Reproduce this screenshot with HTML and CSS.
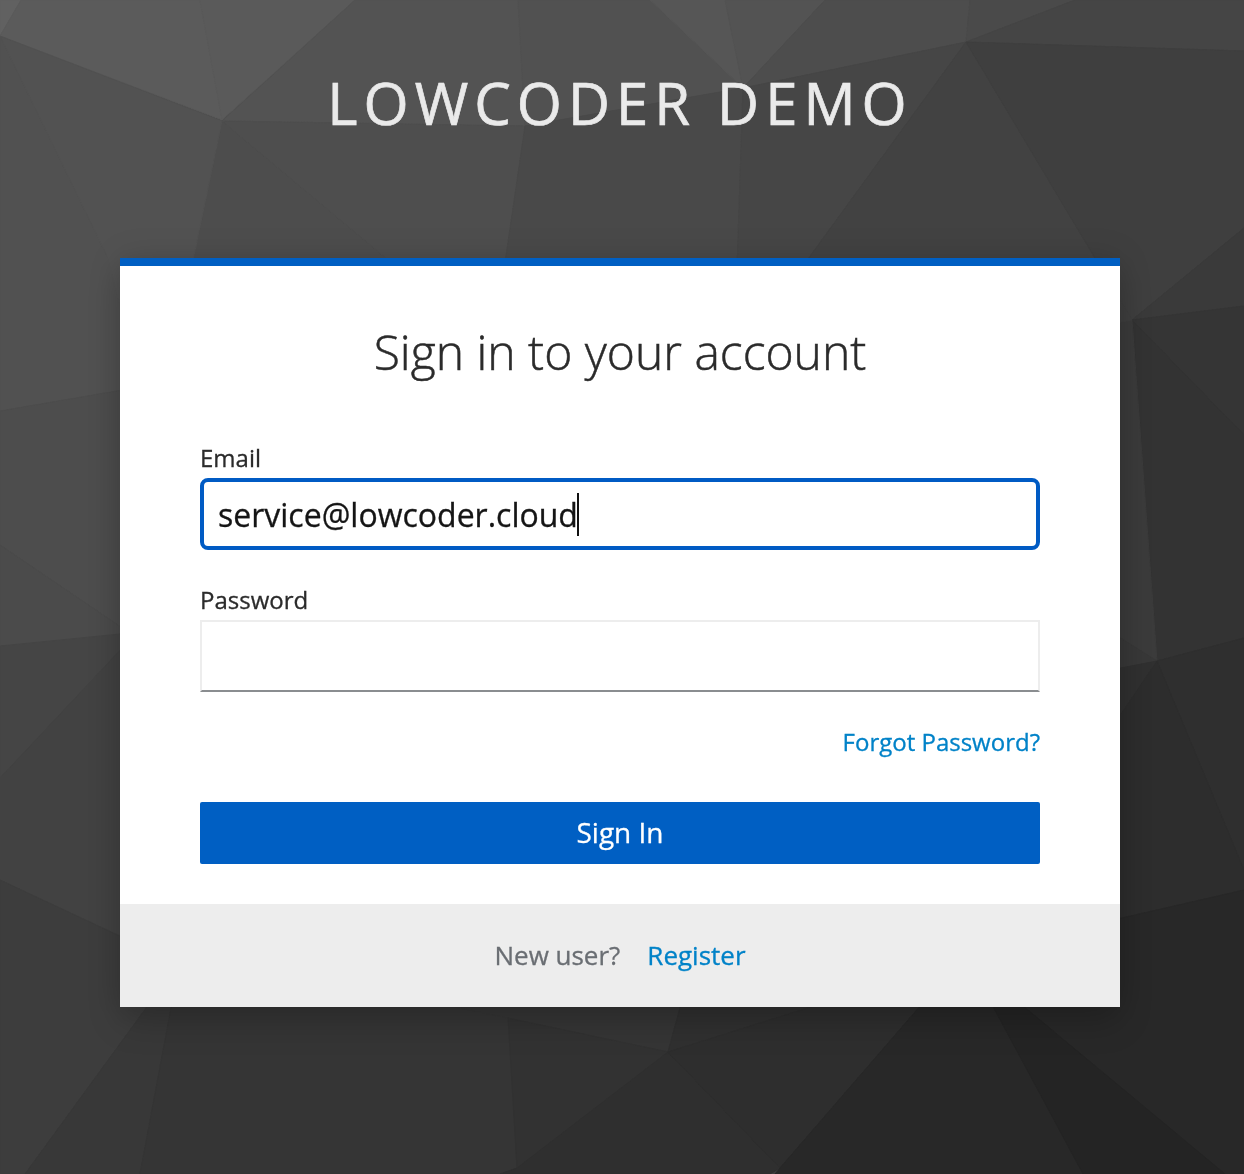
FILE: index.html
```html
<!DOCTYPE html>
<html lang="en">
<head>
<meta charset="utf-8">
<title>Sign in to Lowcoder Demo</title>
<link rel="stylesheet" href="styles.css">
</head>
<body>
<svg class="backdrop" viewBox="0 0 1244 1174" preserveAspectRatio="xMidYMid slice" aria-hidden="true">
  <!-- top -->
  <path color="#616161" d="M0 0H21L0 36Z"/>
  <path color="#5b5b5b" d="M21 0H200L222 120L0 36Z"/>
  <path color="#5a5a5a" d="M200 0H355L222 120Z"/>
  <path color="#535353" d="M355 0H518L525 126L222 121Z"/>
  <path color="#515151" d="M518 0H650L743 88L525 126Z"/>
  <path color="#565656" d="M650 0H725L743 88Z"/>
  <path color="#535353" d="M725 0H825L743 88Z"/>
  <path color="#4d4d4d" d="M825 0H970L966 42L743 88Z"/>
  <path color="#4a4a4a" d="M970 0H1075L966 42Z"/>
  <path color="#454545" d="M1075 0H1244V51L966 42Z"/>
  <path color="#4d4d4d" d="M222 121L400 270H191Z"/>
  <path color="#4e4e4e" d="M222 121L525 126L504 270H400Z"/>
  <path color="#494949" d="M525 126L743 88L737 270H504Z"/>
  <path color="#464646" d="M743 88L966 42L800 270H737Z"/>
  <path color="#424242" d="M966 42L1132 320L800 270Z"/>
  <path color="#3f3f3f" d="M966 42L1244 51V228L1132 320Z"/>
  <!-- left side -->
  <path color="#515151" d="M0 36L108 258L140 387L0 411Z"/>
  <path color="#525252" d="M0 36L222 121L191 270L140 387L108 258Z"/>
  <path color="#4d4d4d" d="M0 411L140 387V640L0 545Z"/>
  <path color="#4b4b4b" d="M0 545L140 640L0 646Z"/>
  <path color="#454545" d="M0 646L140 632L0 778Z"/>
  <path color="#424242" d="M0 778L140 629V945L0 880Z"/>
  <path color="#3d3d3d" d="M0 880L160 955V989L25 1174H0Z"/>
  <!-- right side -->
  <path color="#3a3a3a" d="M1132 320L1244 228V306Z"/>
  <path color="#353535" d="M1132 320L1244 306V435Z"/>
  <path color="#333333" d="M1132 320L1244 435V638L1157 661Z"/>
  <path color="#3b3b3b" d="M1132 320L1157 661L1100 625V326Z"/>
  <path color="#3f3f3f" d="M1132 320L1100 270V326Z"/>
  <path color="#383838" d="M1157 661L1100 625V672Z"/>
  <path color="#303030" d="M1157 661L1100 672V745Z"/>
  <path color="#2f2f2f" d="M1157 661L1244 638V870Z"/>
  <path color="#2d2d2d" d="M1157 661L1244 870V890L1100 923V745Z"/>
  <!-- bottom -->
  <path color="#383838" d="M160 989L180 960L140 1174H25Z"/>
  <path color="#353535" d="M180 960H507L517 1168L500 1174H140Z"/>
  <path color="#353535" d="M440 960H693L668 1052L455 1007Z"/>
  <path color="#323232" d="M508 1018L668 1052L517 1168Z"/>
  <path color="#303030" d="M693 960H960L668 1052Z"/>
  <path color="#2f2f2f" d="M668 1052L780 1168L770 1174H500L517 1168Z"/>
  <path color="#2e2e2e" d="M668 1052L960 960L780 1168Z"/>
  <path color="#282828" d="M960 960L1100 923L1244 890V1174H775L780 1168Z"/>
  <path color="#242424" d="M968 960L1083 1174H1225Z"/>
</svg>
<div class="page">
  <header class="brand">Lowcoder Demo</header>
  <main class="card">
    <div class="card-body">
      <h1 class="title">Sign in to your account</h1>
      <form class="form">
        <div class="group">
          <div class="label">Email</div>
          <div class="field field-active"><span>service@lowcoder.cloud</span><i class="caret"></i></div>
        </div>
        <div class="group">
          <div class="label">Password</div>
          <div class="field"></div>
        </div>
        <a class="link forgot">Forgot Password?</a>
        <button class="submit" type="button">Sign In</button>
      </form>
    </div>
    <footer class="card-footer"><span>New user?</span><a class="link">Register</a></footer>
  </main>
</div>
</body>
</html>
```
FILE: styles.css
```css
* { box-sizing: border-box; }

body {
  margin: 0;
  background: #3e3e3e;
  color: #2b2b2b;
  font-family: "Open Sans", sans-serif;
  -webkit-text-stroke: .3px currentColor;
  overflow: hidden;
}

.backdrop {
  position: fixed;
  inset: 0;
  z-index: -1;
  width: 100%;
  height: 100%;
}

/* the thin stroke closes the seams between neighbouring facets */
.backdrop path {
  fill: currentColor;
  stroke: currentColor;
  stroke-width: 1;
  stroke-linejoin: round;
}

.page {
  display: flex;
  flex-direction: column;
  width: 1240px;
  min-height: 1174px;
}

.brand {
  height: 258px;
  padding-top: 63px;
  color: #eaeaea;
  font-size: 58px;
  line-height: 80px;
  letter-spacing: 6px;
  text-align: center;
  text-transform: uppercase;
  -webkit-text-stroke-width: .7px;
}

.card {
  display: flex;
  flex-direction: column;
  align-self: center;
  width: 1000px;
  height: 749px;
  background: #fff;
  border-top: 8px solid #005fc3;
  box-shadow: 0 16px 32px rgba(3, 3, 3, .16), 0 0 32px rgba(3, 3, 3, .12);
}

.card-body {
  flex: 1;
  padding: 55px 80px 0;
}

.title {
  margin: 0 0 59px;
  font-size: 48px;
  font-weight: 300;
  line-height: 62px;
  text-align: center;
  -webkit-text-stroke-width: .5px;
}

.form {
  display: flex;
  flex-direction: column;
}

.group { margin-bottom: 34px; }

.label {
  height: 36px;
  font-size: 24px;
  line-height: 32px;
}

.field {
  display: flex;
  align-items: center;
  height: 72px;
  padding: 0 14px;
  border: 2px solid #ededed;
  border-bottom-color: #8a8d90;
  color: #151515;
  font-size: 32px;
}

.field-active {
  border: 4px solid #005bc4;
  border-radius: 8px;
}

.caret {
  width: 2px;
  height: 43px;
  margin-left: -1px;
  background: #111;
}

.link { color: #0082c8; }

.forgot {
  align-self: flex-end;
  font-size: 24px;
  line-height: 32px;
}

.submit {
  height: 62px;
  margin-top: 44px;
  padding: 0 0 2px;
  border: 0;
  border-radius: 2px;
  background: #005fc3;
  color: #fff;
  font-family: inherit;
  font-size: 28px;
  -webkit-text-stroke: .3px #fff;
}

.card-footer {
  display: flex;
  align-items: center;
  justify-content: center;
  gap: 27px;
  height: 103px;
  padding-bottom: 2px;
  background: #ededed;
  color: #6a6e73;
  font-size: 26px;
}

.card-footer span,
.link { -webkit-text-stroke: .3px; }
```
